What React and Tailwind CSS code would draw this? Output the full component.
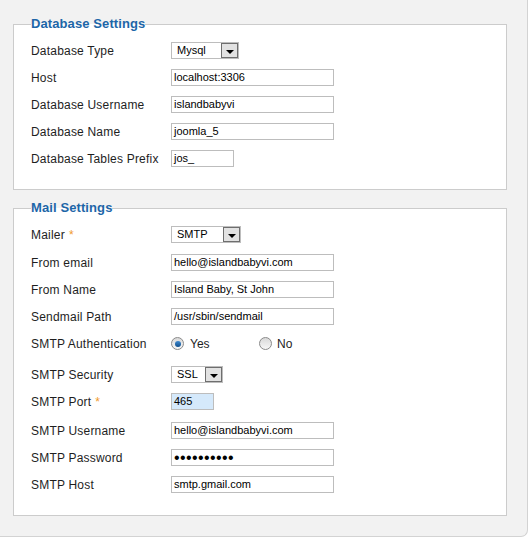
import React from 'react';

const Field = ({ value, width = 'w-[163px]', bg = 'bg-white' }) => (
  <div className={`${width} ${bg} h-[17px] border border-[#bdbdbd] pl-[2px] flex items-center text-[11px] text-black leading-none whitespace-nowrap overflow-hidden`}>
    {value}
  </div>
);

const Select = ({ value, width }) => (
  <div className={`${width} h-[17px] border border-[#bdbdbd] bg-white flex items-stretch text-[11px] text-black`}>
    <div className="flex-1 pl-[5px] flex items-center leading-none">{value}</div>
    <div className="w-[17px] border border-[#6e6e6e] bg-[#e2e2e2] flex items-center justify-center">
      <div className="w-0 h-0 mt-[3px] border-l-[4px] border-r-[4px] border-t-[4px] border-l-transparent border-r-transparent border-t-black" />
    </div>
  </div>
);

const Radio = ({ checked }) => (
  <div className="w-[13px] h-[13px] rounded-full border border-[#8a8a8a] bg-gradient-to-b from-[#d9d9d9] to-[#f7f7f7] flex items-center justify-center">
    {checked && <div className="w-[6px] h-[6px] rounded-full bg-gradient-to-b from-[#3f8ad0] to-[#0e4f8c]" />}
  </div>
);

const Row = ({ label, required, extra = '', children }) => (
  <div className={`h-[27px] flex items-center ${extra}`}>
    <div className="w-[140px] text-[12px] tracking-[0.2px] text-[#1e1e1e] whitespace-nowrap">
      {label}
      {required && <span className="text-[#f09a2c] ml-[4px]">*</span>}
    </div>
    {children}
  </div>
);

const Section = ({ title, className = '', children }) => (
  <fieldset className={`w-[494px] border border-[#cccccc] bg-white pl-[17px] pt-[5px] pb-[17px] m-0 ${className}`}>
    <legend className="px-0 text-[13px] leading-[16px] tracking-[0.1px] font-bold text-[#1d66a8]">{title}</legend>
    {children}
  </fieldset>
);

export default function App() {
  return (
    <div className="w-[528px] h-[537px] bg-[#f2f2f2] border-r border-b border-[#d3d3d3] rounded-br-[7px] pl-[13px] pt-[16px] font-['Liberation_Sans',Arial,sans-serif]">
      <Section title="Database Settings">
        <Row label="Database Type"><Select value="Mysql" width="w-[68px]" /></Row>
        <Row label="Host"><Field value="localhost:3306" /></Row>
        <Row label="Database Username"><Field value="islandbabyvi" /></Row>
        <Row label="Database Name"><Field value="joomla_5" /></Row>
        <Row label="Database Tables Prefix"><Field value="jos_" width="w-[63px]" /></Row>
      </Section>

      <Section title="Mail Settings" className="mt-[10px]">
        <Row label="Mailer" required><Select value="SMTP" width="w-[70px]" /></Row>
        <Row label="From email" extra="mt-[1px]"><Field value="hello@islandbabyvi.com" /></Row>
        <Row label="From Name"><Field value="Island Baby, St John" /></Row>
        <Row label="Sendmail Path"><Field value="/usr/sbin/sendmail" /></Row>
        <Row label="SMTP Authentication">
          <div className="w-[88px] flex items-center gap-[6px] text-[12px] text-[#1e1e1e]">
            <Radio checked />
            <span>Yes</span>
          </div>
          <div className="flex items-center gap-[5px] text-[12px] text-[#1e1e1e]">
            <Radio />
            <span>No</span>
          </div>
        </Row>
        <Row label="SMTP Security" extra="mt-[4px]"><Select value="SSL" width="w-[52px]" /></Row>
        <Row label="SMTP Port" required><Field value="465" width="w-[43px]" bg="bg-[#d5e9fb]" /></Row>
        <Row label="SMTP Username" extra="mt-[2px]"><Field value="hello@islandbabyvi.com" /></Row>
        <Row label="SMTP Password">
          <Field value={<span className="text-[16px] tracking-[0.4px] leading-none">••••••••••</span>} />
        </Row>
        <Row label="SMTP Host"><Field value="smtp.gmail.com" /></Row>
      </Section>
    </div>
  );
}
